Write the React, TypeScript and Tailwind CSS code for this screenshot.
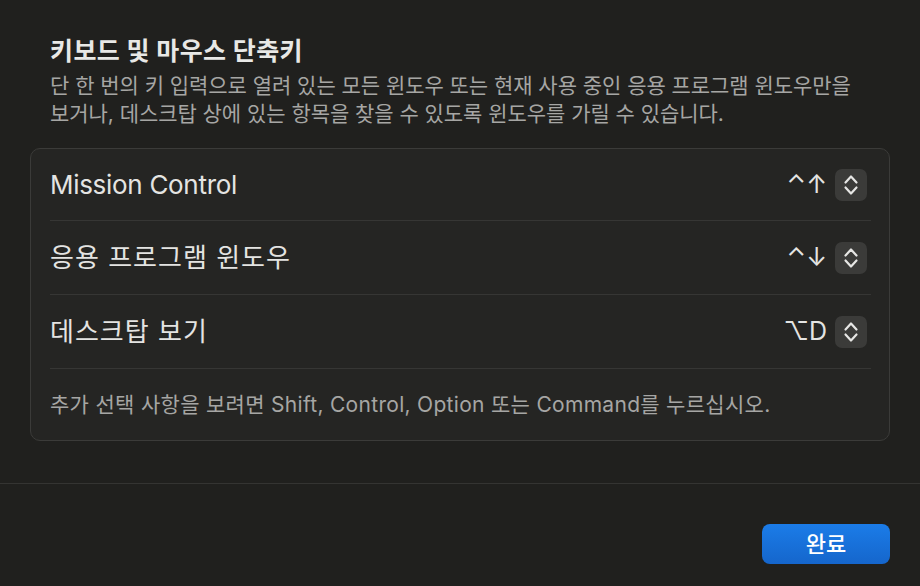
import React from "react";

function Stepper() {
  return (
    <div className="w-8 h-8 rounded-[7px] bg-[#3b3b39] flex items-center justify-center">
      <svg width="16" height="24" viewBox="0 0 16 24" fill="none" stroke="#e6e6e4" strokeWidth="2.2" strokeLinecap="round" strokeLinejoin="round">
        <path d="M2.5 9.5 L8 3.5 L13.5 9.5" />
        <path d="M2.5 14.5 L8 20.5 L13.5 14.5" />
      </svg>
    </div>
  );
}

function Row({ label, keys, h, korean }: { label: string; keys: React.ReactNode; h: string; korean?: boolean }) {
  return (
    <div className={`${h} flex items-center justify-between border-b border-[#363634]`}>
      <span className={`text-[26px] text-[#e4e4e2] ${korean ? "tracking-[1px]" : "tracking-[-0.3px]"}`}>{label}</span>
      <div className="flex items-center gap-2 mr-1">
        <span className="text-[25px] text-[#e4e4e2] leading-none">{keys}</span>
        <Stepper />
      </div>
    </div>
  );
}

export default function App() {
  return (
    <div
      className="w-[920px] h-[586px] bg-[#20201e] flex flex-col"
      style={{ fontFamily: "Inter, 'Noto Sans CJK KR', 'DejaVu Sans', sans-serif" }}
    >
      <div className="px-[30px] pt-[35px] flex-1">
        <div className="px-5">
          <h1 className="text-[25px] font-bold text-[#e8e8e6] leading-[32px] tracking-[0.4px]">키보드 및 마우스 단축키</h1>
          <p className="text-[21px] text-[#a6a6a4] leading-[28px] mt-[5px] tracking-[-0.05px]">
            단 한 번의 키 입력으로 열려 있는 모든 윈도우 또는 현재 사용 중인 응용 프로그램 윈도우만을
            <br />
            보거나, 데스크탑 상에 있는 항목을 찾을 수 있도록 윈도우를 가릴 수 있습니다.
          </p>
        </div>
        <div className="mt-[20px] h-[293px] rounded-[10px] border border-[#3b3b39] bg-[#252523] pl-[19px] pr-[18px]">
          <Row label="Mission Control" keys="⌃↑" h="h-[72px]" />
          <Row label="응용 프로그램 윈도우" keys="⌃↓" h="h-[74px]" korean />
          <Row label="데스크탑 보기" keys="⌥D" h="h-[74px]" korean />
          <div className="h-[71px] flex items-center">
            <span className="text-[21px] text-[#a6a6a4] tracking-[0.3px]">
              추가 선택 사항을 보려면 Shift, Control, Option 또는 Command를 누르십시오.
            </span>
          </div>
        </div>
      </div>
      <div className="border-t border-[#343432] h-[103px] flex items-start justify-end px-[30px] pt-[40px]">
        <button className="w-[128px] h-[40px] rounded-[8px] bg-gradient-to-b from-[#1b7ce8] to-[#1566cc] text-white text-[22px] font-medium">
          완료
        </button>
      </div>
    </div>
  );
}
